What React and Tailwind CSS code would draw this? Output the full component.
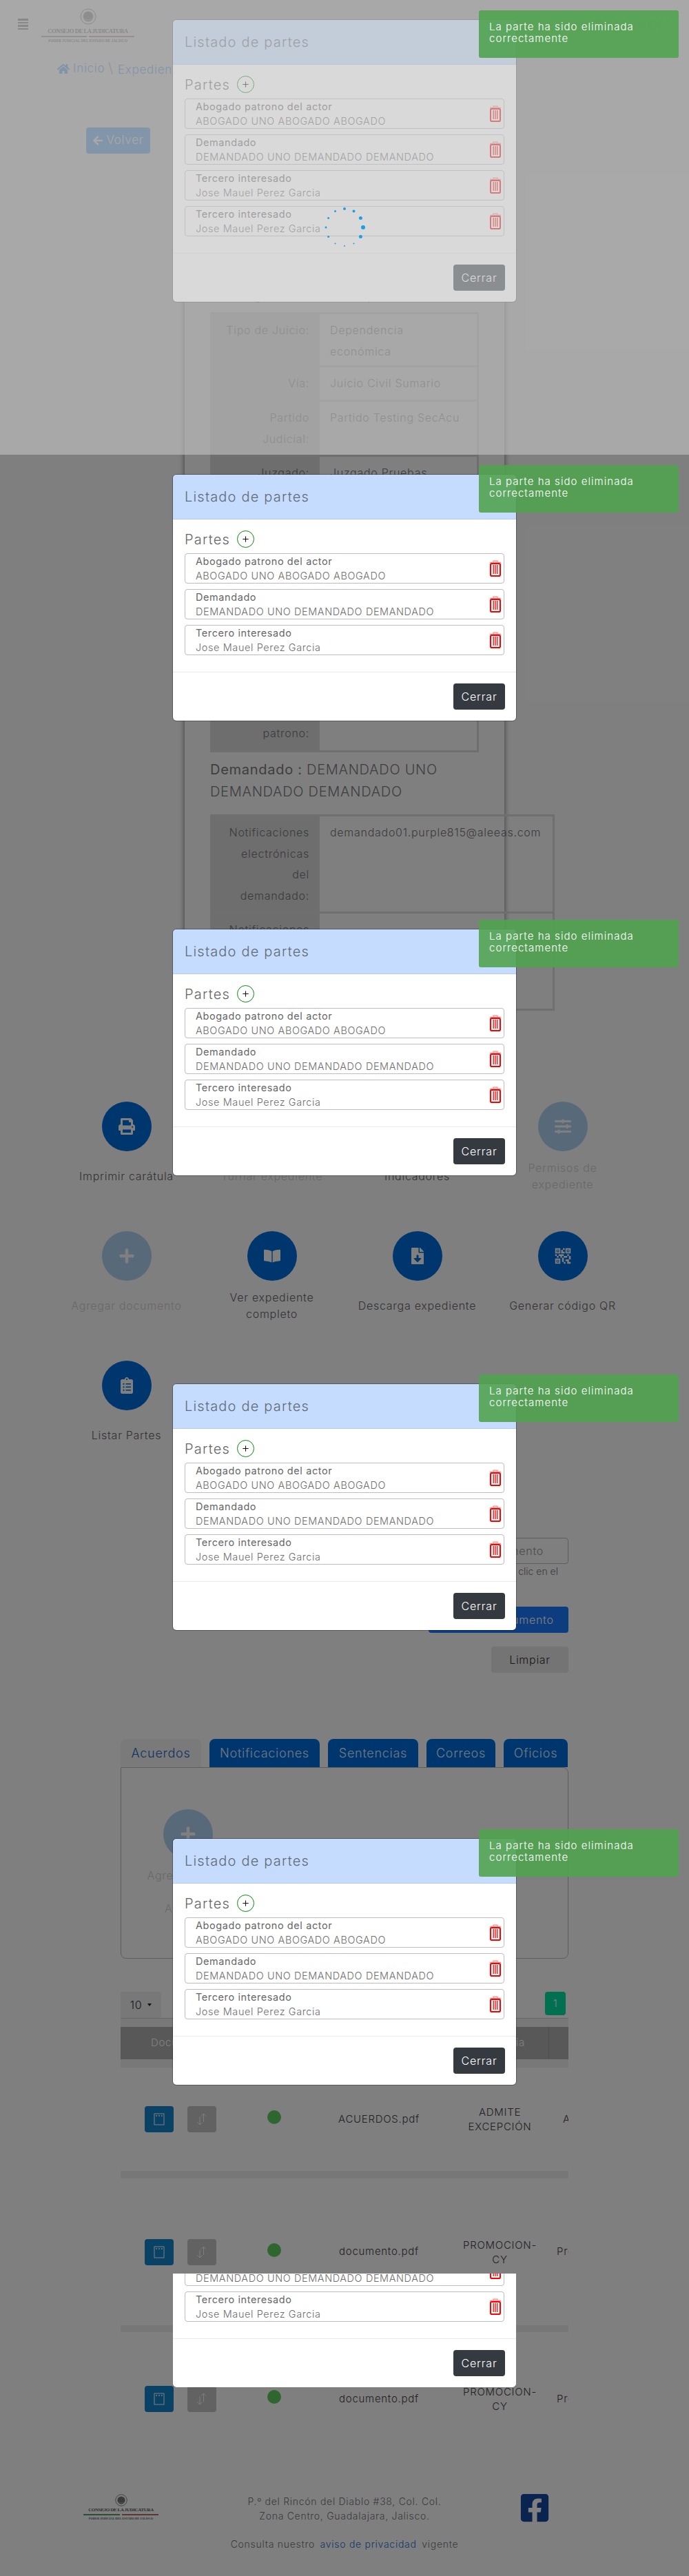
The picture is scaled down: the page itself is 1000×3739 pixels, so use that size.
import React from "react";
import { Plus } from "lucide-react";
import {
  FaArrowLeft,
  FaBookOpen,
  FaClipboardList,
  FaFacebookSquare,
  FaFileDownload,
  FaHome,
  FaPlus,
  FaPrint,
  FaSlidersH,
  FaExchangeAlt,
  FaChartBar,
} from "react-icons/fa";
import { MdQrCode2 } from "react-icons/md";

const FONT = "font-['Inter','Liberation_Sans',sans-serif]";

const PARTES = [
  ["Abogado patrono del actor", "ABOGADO UNO ABOGADO ABOGADO"],
  ["Demandado", "DEMANDADO UNO DEMANDADO DEMANDADO"],
  ["Tercero interesado", "Jose Mauel Perez Garcia"],
];

const ACCIONES = [
  { label: "Imprimir carátula", Icon: FaPrint },
  { label: "Turnar expediente", Icon: FaExchangeAlt, off: true },
  { label: "Indicadores", Icon: FaChartBar },
  { label: <>Permisos de<br />expediente</>, Icon: FaSlidersH, off: true },
  { label: "Agregar documento", Icon: FaPlus, off: true },
  { label: <>Ver expediente<br />completo</>, Icon: FaBookOpen },
  { label: "Descarga expediente", Icon: FaFileDownload },
  { label: "Generar código QR", Icon: MdQrCode2, big: true },
  { label: "Listar Partes", Icon: FaClipboardList },
];

function Trash() {
  return (
    <svg width="16" height="24" viewBox="0 0 16 24" fill="none" className="shrink-0">
      <path d="M5 3V1.2h6V3" stroke="#ff8a8a" strokeWidth="1.2" />
      <path d="M0 3.6h16" stroke="#ff8a8a" strokeWidth="1.6" />
      <rect x="1" y="5" width="14" height="18" rx="1.8" stroke="#ff0000" strokeWidth="2" />
      <path d="M5.2 7v13M8 7v13M10.8 7v13" stroke="#ff0000" strokeWidth="1.3" />
    </svg>
  );
}

function ListadoModal({ rows, className }) {
  return (
    <div className={`w-[498px] shrink-0 overflow-hidden rounded-[5px] bg-white outline outline-black/30 ${className || ""}`}>
      <div className="flex h-[65px] items-center border-b border-[#b5cbee] bg-[#c6dcff] px-[17px] text-[20px] font-light tracking-[0.06em] text-[#5f6b76]">
        Listado de partes
      </div>
      <div className="px-[17px] pb-6 pt-4">
        <div className="mb-2 flex h-[25px] items-center gap-[10px]">
          <span className="text-[20px] font-light tracking-[0.06em] text-[#666]">Partes</span>
          <span className="flex h-[25px] w-[25px] items-center justify-center rounded-full border border-[#0a8a0a]">
            <Plus size={13} strokeWidth={2} color="#111" />
          </span>
        </div>
        <div className="flex flex-col gap-2">
          {rows.map(([tipo, nombre], i) => (
            <div key={i} className="flex h-[44px] items-center justify-between rounded-[4px] border border-[#bdbdbd] pl-[15px] pr-[4px]">
              <div className="text-[14.4px] leading-[21px] tracking-[0.045em] text-[#666]">
                <div className="font-normal">{tipo}</div>
                <div className="font-light text-[#6d6d6d]">{nombre}</div>
              </div>
              <Trash />
            </div>
          ))}
        </div>
      </div>
      <div className="flex justify-end border-t border-[#e9ecef] px-[16px] py-4">
        <button className="h-[38px] w-[75px] rounded-[4px] bg-[#343a40] text-[16px] font-light tracking-[0.05em] text-white">
          Cerrar
        </button>
      </div>
    </div>
  );
}

function Toast({ className }) {
  return (
    <div className={`absolute left-[695px] h-[69px] w-[290px] rounded-[3px] bg-[#51a351]/90 pl-[15px] pt-[15px] text-[15px] font-light leading-[17px] tracking-[0.07em] text-white ${className}`}>
      La parte ha sido eliminada
      <br />
      correctamente
    </div>
  );
}

function Spinner() {
  const dots = [2, 2, 2.5, 3, 2.5, 1, 1, 1, 1.5, 1.5, 1.5, 1.5];
  return (
    <svg width="64" height="64" viewBox="-32 -32 64 64" className="absolute left-[468px] top-[298px]">
      {dots.map((r, i) => {
        const a = (i * Math.PI) / 6 - Math.PI / 2;
        return <circle key={i} cx={27 * Math.cos(a)} cy={27 * Math.sin(a)} r={r} fill="#1f9fe3" />;
      })}
    </svg>
  );
}

function Logo({ small }) {
  return (
    <div className={`flex flex-col items-center font-['Liberation_Serif',serif] font-bold text-[#5a5a5a] ${small ? "w-[109px]" : "w-[135px]"}`}>
      <svg width={small ? 18 : 24} height={small ? 18 : 24} viewBox="0 0 24 24" fill="none">
        <circle cx="12" cy="12" r="11" stroke="#666" strokeWidth="1" />
        <circle cx="12" cy="12" r="7.5" fill="#777" />
        <path d="M6 15c3 3 9 3 12 0" stroke="#aaa" strokeWidth="1.2" />
      </svg>
      <div className={small ? "mt-[1px] whitespace-nowrap text-[7px] leading-[9px] tracking-[-0.05em]" : "mt-[4px] whitespace-nowrap text-[8.6px] leading-[11px] tracking-[-0.05em]"}>
        CONSEJO DE LA JUDICATURA
      </div>
      <div className="my-[1px] flex w-full gap-[3px]">
        <div className="h-[2px] flex-1 bg-[#5d9a6b]" />
        <div className="h-[2px] flex-1 bg-[#b86a6a]" />
      </div>
      <div className={small ? "whitespace-nowrap text-[4.4px] leading-[7px] tracking-normal" : "whitespace-nowrap text-[5.4px] leading-[9px] tracking-normal"}>
        PODER JUDICIAL DEL ESTADO DE JALISCO
      </div>
    </div>
  );
}

function FilaDatos({ label, value, h }) {
  return (
    <div className={`grid grid-cols-[156px_1fr] border-b-[3px] border-[#dedede] ${h}`}>
      <div className="whitespace-nowrap border-r-[3px] border-[#dedede] bg-[#dcdcdc] px-[12px] py-2 text-right">{label}</div>
      <div className="whitespace-nowrap px-[15px] py-2">{value}</div>
    </div>
  );
}

function FilaTabla({ className, nombre, tipo, desc, descPad }) {
  return (
    <div className={`grid grid-cols-[175px_96px_208px_143px_1fr] items-center ${className}`}>
      <div className="flex gap-5 pl-[35px]">
        <span className="flex h-[38px] w-[42px] items-center justify-center rounded-[4px] bg-[#1484cc]">
          <svg width="16" height="18" viewBox="0 0 16 18" fill="none" stroke="#fff" strokeWidth="1">
            <rect x="1" y="1" width="14" height="16" />
            <path d="M3.5 4h1.4M7.3 4h1.4M11.1 4h1.4" strokeWidth="2" />
          </svg>
        </span>
        <span className="flex h-[38px] w-[42px] items-center justify-center rounded-[4px] bg-[#c4c4c4]">
          <svg width="16" height="18" viewBox="0 0 16 18" fill="none" stroke="#fff" strokeWidth="1">
            <path d="M10.5 13V1M7 4.5L10.5 1 14 4.5M5 5.5V17M1.5 13.5L5 17l3.5-3.5" />
          </svg>
        </span>
      </div>
      <div className="flex justify-center">
        <span className="mb-1.5 h-5 w-5 rounded-full bg-[#5ecc60]" />
      </div>
      <div className="text-center text-[#444]">{nombre}</div>
      <div className="text-center leading-[21px] text-[#444]">{tipo}</div>
      <div className={`whitespace-nowrap text-[#444] ${descPad}`}>{desc}</div>
    </div>
  );
}

export default function App() {
  return (
    <div className={`relative h-[3739px] w-[1000px] overflow-hidden bg-white text-[16px] font-light tracking-[0.045em] text-[#777] ${FONT}`}>
      {/* pagina */}
      <header className="flex h-[85px]">
        <div className="ml-[26px] mt-[27px] flex h-[16px] w-[15px] flex-col justify-between">
          <div className="h-[2.5px] bg-[#555]" />
          <div className="h-[2.5px] bg-[#555]" />
          <div className="h-[2.5px] bg-[#555]" />
          <div className="h-[2.5px] bg-[#555]" />
        </div>
        <div className="ml-[19px] mt-[12px]">
          <Logo />
        </div>
        <div className="ml-auto mr-[25px] mt-[26px] text-[15px] text-[#888]">JUAN PEREZ VALDEZ</div>
      </header>

      <nav className="flex h-[30px] items-center pl-[83px] text-[#2f8fff]">
        <FaHome size={18} />
        <span className="ml-[5px] text-[17px]">Inicio</span>
        <span className="mb-[2px] ml-[5px] text-[20px] text-[#888]">\</span>
        <span className="ml-[6px] mt-1 text-[17px]">Expediente</span>
      </nav>

      <button className="ml-[125px] mt-[70px] flex h-[38px] w-[93px] items-center justify-center gap-1 rounded-[4px] bg-[#3a9cff] text-[17px] text-white">
        <FaArrowLeft size={16} />
        Volver
      </button>

      <section className="ml-[268px] mt-[77px] w-[464px] bg-white pb-[26px] pl-[37px] pt-[113px] leading-[30.5px] shadow-[0_0_8px_rgba(0,0,0,0.55)]">
        <h3 className="mb-[10px] whitespace-nowrap text-[20px] leading-[30px]">Datos generales del expediente</h3>
        <div className="w-[390px] border-x-[3px] border-t-[3px] border-[#dedede]">
          <FilaDatos label="Tipo de Juicio:" value={<>Dependencia<br />económica</>} h="h-[77px]" />
          <FilaDatos label="Vía:" value="Juicio Civil Sumario" h="h-[50px]" />
          <FilaDatos label={<>Partido<br />Judicial:</>} value="Partido Testing SecAcu" h="h-[80px]" />
          <FilaDatos label="Juzgado:" value="Juzgado Pruebas" h="h-[80px]" />
          <FilaDatos label="Actor:" value="ACTOR UNO" h="h-[206px]" />
          <FilaDatos label={<>Notificaciones<br />electrónicas<br />del abogado<br />patrono:</>} value="" h="h-[143px]" />
        </div>
        <h3 className="mt-[9px] w-[400px] text-[20px] leading-[32px] text-[#7c7c7c]">
          <span className="font-normal">Demandado :</span> DEMANDADO UNO
          <br />
          DEMANDADO DEMANDADO
        </h3>
        <div className="mt-[17px] w-[500px] border-x-[3px] border-t-[3px] border-[#dedede]">
          <FilaDatos label={<>Notificaciones<br />electrónicas<br />del<br />demandado:</>} value="demandado01.purple815@aleeas.com" h="h-[141px]" />
          <FilaDatos label={<>Notificaciones<br />físicas<br />del<br />demandado:</>} value="" h="h-[141px]" />
        </div>
      </section>

      <section className="ml-[78px] mt-[106px] grid w-[844px] grid-cols-4">
        {ACCIONES.map(({ label, Icon, off, big }, i) => (
          <div key={i} className={`flex h-[188px] flex-col items-center ${off ? "opacity-30" : ""}`}>
            <span className="flex h-[72px] w-[72px] items-center justify-center rounded-full bg-[#006cdc] text-white">
              <Icon size={big ? 30 : 24} />
            </span>
            <span className="flex h-[72px] w-[205px] items-center justify-center whitespace-nowrap text-center leading-[24px] text-[#666]">{label}</span>
          </div>
        ))}
      </section>

      <section className="mt-[69px] flex flex-col items-end pr-[175px]">
        <div className="flex h-[38px] w-[400px] items-center justify-end rounded-[4px] border border-[#bbb] pr-[35px] text-[#999]">
          Nombre del documento
        </div>
        <div className="mt-[1px] pr-[15px] text-[14px] leading-[20px] tracking-normal">Selecciona dando clic en el</div>
        <button className="mt-[41px] h-[38px] w-[203px] rounded-[4px] bg-[#1c7aff] text-white">Agregar documento</button>
        <button className="mt-5 h-[38px] w-[112px] rounded-[4px] bg-[#e8e8e8] text-[#333]">Limpiar</button>
      </section>

      <section className="ml-[175px] mt-[96px] w-[650px]">
        <div className="flex h-[41px] gap-3 text-[18px]">
          <span className="flex w-[117px] items-center justify-center rounded-t-[8px] bg-[#f4f4f4] text-[#1a66c4]">Acuerdos</span>
          <span className="flex w-[160px] items-center justify-center rounded-t-[8px] bg-[#006cdc] text-[#e6f1ff]">Notificaciones</span>
          <span className="flex w-[131px] items-center justify-center rounded-t-[8px] bg-[#006cdc] text-[#e6f1ff]">Sentencias</span>
          <span className="flex w-[100px] items-center justify-center rounded-t-[8px] bg-[#006cdc] text-[#e6f1ff]">Correos</span>
          <span className="flex w-[93px] items-center justify-center rounded-t-[8px] bg-[#006cdc] text-[#e6f1ff]">Oficios</span>
        </div>
        <div className="h-[278px] rounded-b-[8px] rounded-tr-[8px] border border-[#bbb] pl-[17px] pt-[60px]">
          <div className="flex w-[160px] flex-col items-center opacity-30">
            <span className="flex h-[72px] w-[72px] items-center justify-center rounded-full bg-[#006cdc] text-white">
              <FaPlus size={24} />
            </span>
            <div className="mt-[12px] whitespace-nowrap text-center leading-[24px] text-[#666]">
              Agregar nuevo
              <br />
              de
              <br />
              Acuerdo
            </div>
          </div>
        </div>
      </section>

      <section className="ml-[175px] mt-[48px] w-[650px] overflow-hidden text-[15px]">
        <div className="flex h-[39px] items-start justify-between border-b border-[#ccc] pr-[4px]">
          <span className="flex h-[38px] w-[59px] items-center justify-center gap-2 rounded-[4px] bg-[#f0f0f0] text-[16px] text-[#333]">
            10
            <span className="h-0 w-0 border-x-[3px] border-t-[4px] border-x-transparent border-t-[#222]" />
          </span>
          <span className="flex h-[34px] w-[30px] items-center justify-center rounded-[4px] bg-[#00e0a0] text-white">1</span>
        </div>
        <div className="h-3 bg-[#f0f0f0]" />
        <div className="grid h-[47px] grid-cols-[175px_96px_208px_143px_1fr] items-center bg-[#b0b0b0] text-center text-white">
          <span>Documento</span>
          <span>Estado</span>
          <span>Nombre</span>
          <span className="flex h-full items-center justify-center border-r border-[#999]">Categoría</span>
          <span className="whitespace-nowrap pl-[30px]"></span>
        </div>
        <div className="h-3 bg-[#f0f0f0]" />
        <FilaTabla className="h-[150px]" nombre="ACUERDOS.pdf" tipo={<>ADMITE<br />EXCEPCIÓN</>} desc="Acuerdo" descPad="pl-[20px]" />
        <div className="h-[11px] bg-[#eeeeee]" />
        <FilaTabla className="h-[213px]" nombre="documento.pdf" tipo={<>PROMOCION-<br />CY</>} desc="Promoción" descPad="pl-[11px]" />
        <div className="h-[10px] bg-[#eeeeee]" />
        <FilaTabla className="h-[194px]" nombre="documento.pdf" tipo={<>PROMOCION-<br />CY</>} desc="Promoción" descPad="pl-[11px]" />
      </section>

      <footer className="mt-[41px] text-[14px] leading-[21px]">
        <div className="flex h-[42px] pl-[121px]">
          <Logo small />
          <div className="ml-[70px] w-[400px] text-center">
            P.º del Rincón del Diablo #38, Col. Col.
            <br />
            Zona Centro, Guadalajara, Jalisco.
          </div>
          <FaFacebookSquare size={46} className="-mt-[3px] ml-[53px] text-[#16469f]" />
        </div>
        <div className="mt-5 text-center">
          Consulta nuestro <span className="mx-[3px] text-[#2a6fd0]">aviso de privacidad</span> vigente
        </div>
      </footer>

      {/* fondo del modal */}
      <div className="absolute inset-0 bg-black/50" />

      <ListadoModal rows={[PARTES[0], PARTES[1], PARTES[2], PARTES[2]]} className="absolute left-[251px] top-[29px]" />
      <div className="absolute left-0 top-0 h-[660px] w-full bg-[rgba(194,194,194,0.62)]" />
      <Spinner />

      <ListadoModal rows={PARTES} className="absolute left-[251px] top-[689px]" />
      <ListadoModal rows={PARTES} className="absolute left-[251px] top-[1349px]" />
      <ListadoModal rows={PARTES} className="absolute left-[251px] top-[2009px]" />
      <ListadoModal rows={PARTES} className="absolute left-[251px] top-[2669px]" />
      <div className="absolute left-[251px] top-[3300px] flex h-[165px] w-[498px] flex-col justify-end overflow-hidden">
        <ListadoModal rows={PARTES} />
      </div>

      <Toast className="top-[15px]" />
      <Toast className="top-[675px]" />
      <Toast className="top-[1335px]" />
      <Toast className="top-[1995px]" />
      <Toast className="top-[2655px]" />
    </div>
  );
}
